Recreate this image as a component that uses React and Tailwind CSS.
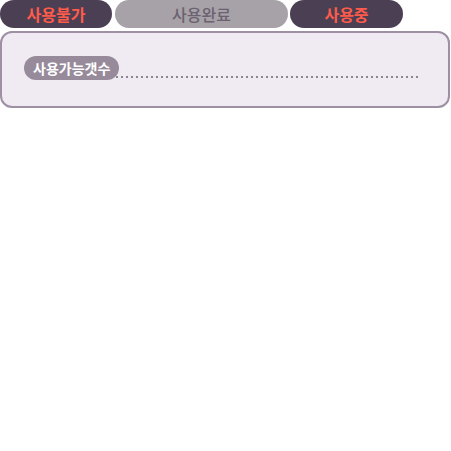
export default function App() {
  const font = { fontFamily: '"Noto Sans CJK KR", "Noto Sans", sans-serif' };

  return (
    <div className="w-[451px] h-[451px] bg-white" style={font}>
      <div className="flex h-[28px] items-stretch">
        <div className="flex w-[112px] items-center justify-center rounded-[14px] bg-[#4b3f53] text-[16px] font-bold text-[#ff5b4b]">
          사용불가
        </div>
        <div className="ml-[3px] flex w-[173px] items-center justify-center rounded-[14px] bg-[#a7a1a8] text-[16px] font-medium text-[#6b6170]">
          사용완료
        </div>
        <div className="ml-[2px] flex w-[113px] items-center justify-center rounded-[14px] bg-[#4b3f53] text-[16px] font-bold text-[#ff5b4b]">
          사용중
        </div>
      </div>

      <div className="mt-[3px] h-[77px] w-[450px] rounded-[12px] border-2 border-[#9d90a2] bg-[#f0eaf2] pl-[22px] pr-[28px] pt-[23px]">
        <div className="flex items-end">
          <div className="relative z-10 flex h-[24px] items-center rounded-[12px] bg-[#978b9b] px-[9px] text-[14px] font-bold text-white">
            사용가능갯수
          </div>
          <div className="-ml-[8px] mb-[2px] h-[2px] flex-1 bg-[linear-gradient(to_right,#8d8492_40%,transparent_0)] bg-[length:5px_2px] bg-repeat-x" />
        </div>
      </div>
    </div>
  );
}
